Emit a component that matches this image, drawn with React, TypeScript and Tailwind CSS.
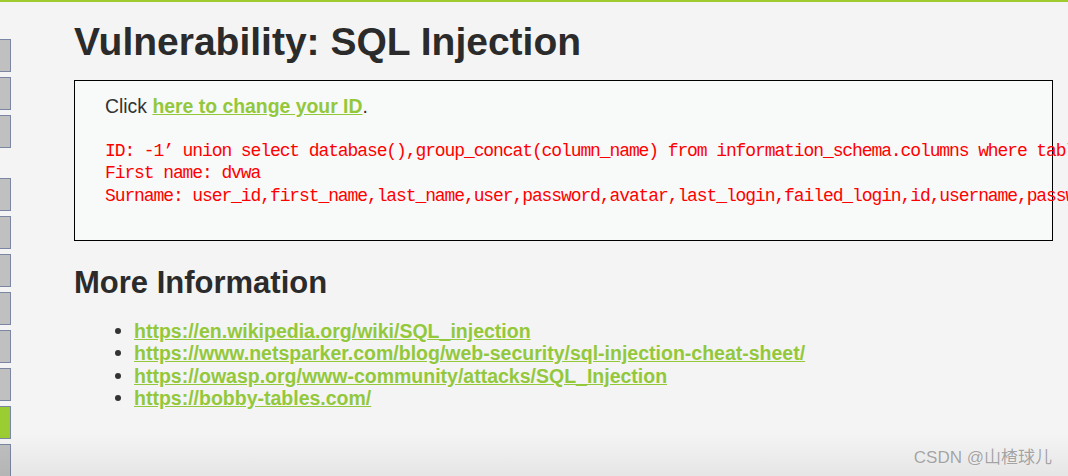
import React from "react";

const links = [
  "https://en.wikipedia.org/wiki/SQL_injection",
  "https://www.netsparker.com/blog/web-security/sql-injection-cheat-sheet/",
  "https://owasp.org/www-community/attacks/SQL_Injection",
  "https://bobby-tables.com/",
];

function SideButton({ active = false, extraTop = false }: { active?: boolean; extraTop?: boolean }) {
  return (
    <div
      className={
        "w-[11px] h-[33px] border border-l-0 border-[#7a86a4] " +
        (active ? "bg-[#9acd32] " : "bg-[#c0c0c0] ") +
        (extraTop ? "mt-[30px]" : "mt-[5px]")
      }
    />
  );
}

export default function App() {
  return (
    <div
      className="relative w-[1068px] h-[476px] overflow-hidden bg-[#f4f4f4] border-t-2 border-[#9fcb2e] text-[#333]"
      style={{ fontFamily: '"Liberation Sans", Arial, sans-serif' }}
    >
      <div className="flex">
        <div className="flex flex-col pt-[32px] shrink-0">
          <SideButton />
          <SideButton />
          <SideButton />
          <SideButton extraTop />
          <SideButton />
          <SideButton />
          <SideButton />
          <SideButton />
          <SideButton />
          <SideButton active />
          <SideButton />
        </div>
        <div className="ml-[63px] w-[979px] shrink-0">
          <h1 className="mt-[20px] text-[39px] leading-none font-bold text-[#2b2b2b]">
            Vulnerability: SQL Injection
          </h1>
          <div className="mt-[19px] h-[161px] border border-black bg-[#f8f9f9] pt-[14px] pl-[30px]">
            <p className="text-[19.4px] leading-[22px]">
              Click{" "}
              <a className="font-bold text-[#93c83b] underline" href="#">
                here to change your ID
              </a>
              .
            </p>
            <pre
              className="mt-[23px] text-[#ff0000] text-[18px] leading-[22.3px] tracking-[-1.1px] whitespace-pre"
              style={{ fontFamily: '"Liberation Mono", "Courier New", monospace' }}
            >
              {"ID: -1’ union select database(),group_concat(column_name) from information_schema.columns where table_name='users'#\n"}
              {"First name: dvwa\n"}
              {"Surname: user_id,first_name,last_name,user,password,avatar,last_login,failed_login,id,username,password"}
            </pre>
          </div>
          <h2 className="mt-[22.6px] text-[31px] leading-[37.2px] font-bold text-[#2b2b2b]">
            More Information
          </h2>
          <ul className="mt-[19px]">
            {links.map((l) => (
              <li key={l} className="flex items-center text-[19.5px] leading-[22.4px]">
                <span className="ml-[41px] w-[6px] h-[6px] rounded-full bg-[#333] shrink-0" />
                <a className="ml-[13px] font-bold text-[#93c83b] underline whitespace-nowrap" href="#">
                  {l}
                </a>
              </li>
            ))}
          </ul>
        </div>
      </div>
      <div className="pointer-events-none absolute left-0 right-0 bottom-0 h-[42px] bg-gradient-to-b from-black/0 to-black/[0.06]" />
      <div
        className="absolute right-[16px] bottom-[8px] text-[17px] leading-[20px] text-[#a3a3a3]"
        style={{
          fontFamily: '"Liberation Sans", "Noto Sans CJK SC", sans-serif',
          textShadow: "0 0 1px #fff",
        }}
      >
        CSDN @山楂球儿
      </div>
    </div>
  );
}
